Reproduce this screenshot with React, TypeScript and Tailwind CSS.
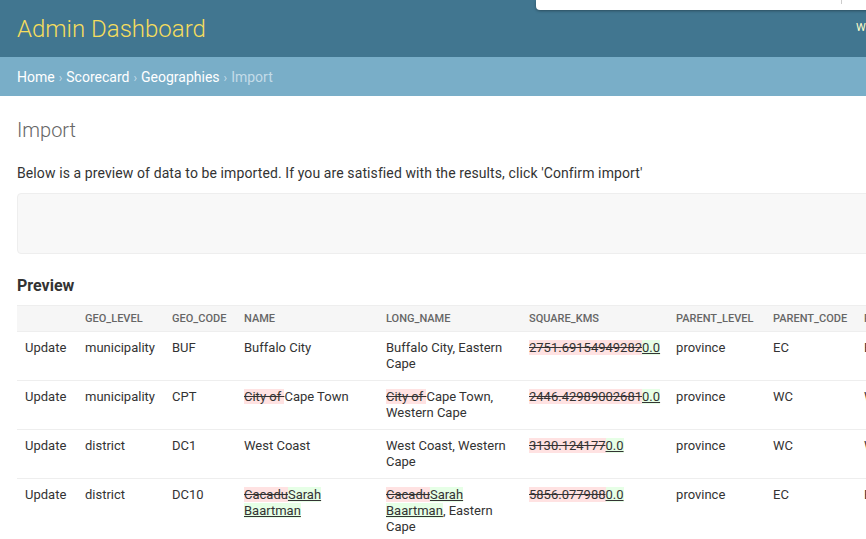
import React from "react";

type Part = { t: string; k?: "del" | "ins" };
type Cell = string | Part[];

const cols = [
  { label: "", w: "w-[60px]" },
  { label: "geo_level", w: "w-[87px]" },
  { label: "geo_code", w: "w-[72px]" },
  { label: "name", w: "w-[142px]" },
  { label: "long_name", w: "w-[143px]" },
  { label: "square_kms", w: "w-[147px]" },
  { label: "parent_level", w: "w-[97px]" },
  { label: "parent_code", w: "w-[91px]" },
  { label: "parent_name", w: "w-[120px]" },
];

const rows: Cell[][] = [
  [
    "Update",
    "municipality",
    "BUF",
    "Buffalo City",
    "Buffalo City, Eastern Cape",
    [{ t: "2751.69154949282", k: "del" }, { t: "0.0", k: "ins" }],
    "province",
    "EC",
    "Eastern Cape",
  ],
  [
    "Update",
    "municipality",
    "CPT",
    [{ t: "City of ", k: "del" }, { t: "Cape Town" }],
    [{ t: "City of ", k: "del" }, { t: "Cape Town, Western Cape" }],
    [{ t: "2446.42989002681", k: "del" }, { t: "0.0", k: "ins" }],
    "province",
    "WC",
    "Western Cape",
  ],
  [
    "Update",
    "district",
    "DC1",
    "West Coast",
    "West Coast, Western Cape",
    [{ t: "3130.124177", k: "del" }, { t: "0.0", k: "ins" }],
    "province",
    "WC",
    "Western Cape",
  ],
  [
    "Update",
    "district",
    "DC10",
    [{ t: "Cacadu", k: "del" }, { t: "Sarah Baartman", k: "ins" }],
    [{ t: "Cacadu", k: "del" }, { t: "Sarah Baartman", k: "ins" }, { t: ", Eastern Cape" }],
    [{ t: "5856.077988", k: "del" }, { t: "0.0", k: "ins" }],
    "province",
    "EC",
    "Eastern Cape",
  ],
];

const renderCell = (c: Cell) => {
  if (typeof c === "string") return c;
  return c.map((p, i) =>
    p.k === "del" ? (
      <del key={i} className="bg-[#ffe2e2] line-through">
        {p.t}
      </del>
    ) : p.k === "ins" ? (
      <ins key={i} className="bg-[#e6ffe6] underline">
        {p.t}
      </ins>
    ) : (
      <span key={i}>{p.t}</span>
    )
  );
};

export default function App() {
  return (
    <div className="relative w-[866px] h-[539px] overflow-hidden bg-white font-['Roboto','Liberation_Sans',sans-serif] text-[#333]">
      <div className="w-[1300px]">
        {/* header */}
        <div className="h-[57px] bg-[#417690] flex items-center px-[17px]">
          <h1 className="w-[189px] text-[24px] font-light text-[#f5dd5d] leading-none">
            Admin Dashboard
          </h1>
          <div className="ml-[650px] text-[11px] uppercase tracking-[0.5px] text-[#ffc] whitespace-nowrap">
            Welcome, <strong className="font-semibold">admin</strong>. View site / Change password / Log out
          </div>
        </div>

        {/* breadcrumbs */}
        <div className="h-[39px] bg-[#79aec8] flex items-center px-[17px] pt-[2px] text-[14px] text-white">
          <a className="text-white">Home</a>
          <span className="mx-[4px] text-[#c4dce8] text-[12px]">›</span>
          <a className="text-white">Scorecard</a>
          <span className="mx-[4px] text-[#c4dce8] text-[12px]">›</span>
          <a className="text-white">Geographies</a>
          <span className="mx-[4px] text-[#c4dce8] text-[12px]">›</span>
          <span className="text-[#c4dce8]">Import</span>
        </div>

        {/* content */}
        <div className="px-[17px] pt-[22px]">
          <h1 className="text-[20px] font-light text-[#666] leading-[24px] mb-[22px]">Import</h1>
          <p className="text-[14px] leading-[18px] tracking-[0.1px] mb-[11px]">
            Below is a preview of data to be imported. If you are satisfied with the results, click 'Confirm import'
          </p>
          <div className="w-[1200px] h-[61px] bg-[#f8f8f8] border border-[#eee] rounded-[4px] mb-[22px]" />

          <h2 className="text-[16px] font-bold leading-[20px] mb-[9px]">Preview</h2>

          <table className="table-fixed border-collapse text-[13px]">
            <thead>
              <tr className="bg-[#f6f6f6] border-t border-b border-[#eee]">
                {cols.map((c, i) => (
                  <th
                    key={i}
                    className={`${c.w} h-[26px] px-2 py-0 text-left text-[11px] leading-[14px] font-medium uppercase text-[#666]`}
                  >
                    {c.label}
                  </th>
                ))}
              </tr>
            </thead>
            <tbody>
              {rows.map((r, ri) => (
                <tr key={ri} className="border-b border-[#eee]">
                  {r.map((c, ci) => (
                    <td key={ci} className="p-2 align-top leading-[16px] h-[49px]">
                      {renderCell(c)}
                    </td>
                  ))}
                </tr>
              ))}
            </tbody>
          </table>
        </div>
      </div>

      {/* dropdown panel overlapping the header */}
      <div className="absolute left-[536px] top-0 w-[340px] h-[10px] bg-white rounded-bl-[4px] shadow-[0_1px_3px_rgba(0,0,0,0.35)]">
        <div className="absolute left-[305px] top-0 w-px h-[4px] bg-[#ccc]" />
      </div>
    </div>
  );
}
